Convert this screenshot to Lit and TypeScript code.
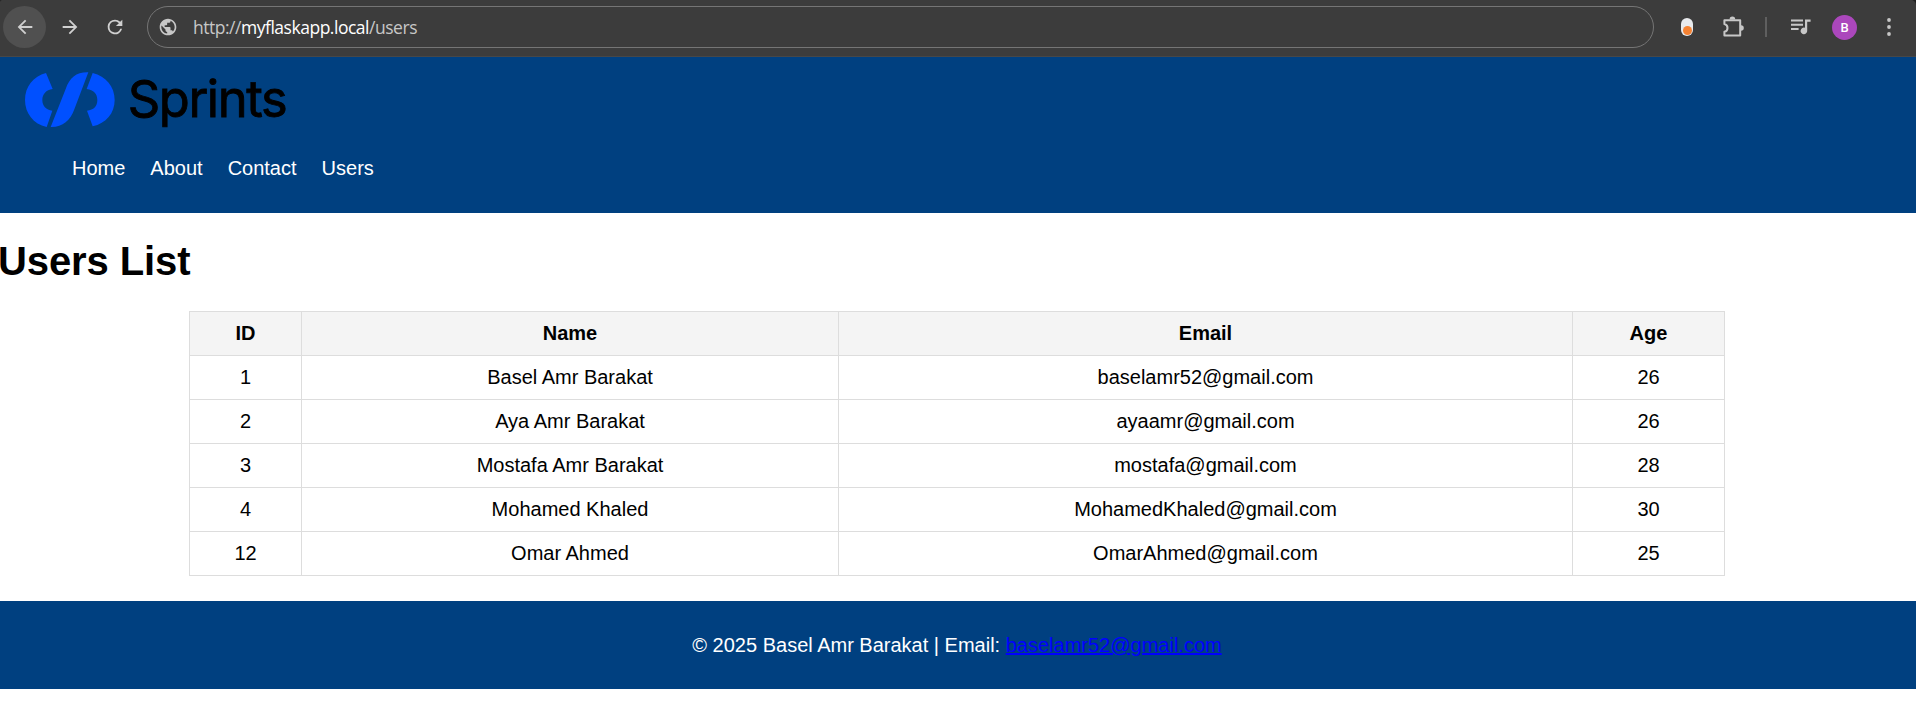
import { LitElement, html, css, svg } from "lit";
import { customElement } from "lit/decorators.js";

@customElement("browser-bar")
class BrowserBar extends LitElement {
  static styles = css`
    :host { display: block; background: #1f1f1f; }
    .bar {
      box-sizing: border-box; height: 57px; padding: 6px 15px 0 3px; display: flex; align-items: flex-start;
      background: #3c3c3c; border-bottom: 1px solid #474747; border-radius: 2px 5px 0 0;
    }
    .btn { width: 43px; height: 42px; display: flex; align-items: center; justify-content: center; margin-right: 2px; flex: none; }
    .round { background: #505050; border-radius: 50%; }
    svg { display: block; flex: none; }
    .address {
      box-sizing: border-box; height: 42px; flex: 1; margin-left: 9px; display: flex; align-items: center;
      border: 1px solid #757575; border-radius: 21px; padding-left: 10px;
      font: 17.5px/24px "Open Sans", "Noto Sans", sans-serif; color: #c7c7c7;
    }
    .url { margin-left: 15px; white-space: pre; letter-spacing: -0.48px; }
    .host { color: #fff; }
    .tools { display: flex; align-items: center; height: 42px; }
    .pill { box-sizing: border-box; width: 12px; height: 18px; border-radius: 6px; background: #e8eaed; margin: 0 27px; display: flex; align-items: flex-end; justify-content: center; padding-bottom: 1px; }
    .dot { width: 9px; height: 9px; border-radius: 50%; background: #f58233; }
    .rule { width: 2px; height: 20px; background: #5f5f5f; margin: 0 24px 0 19px; }
    .avatar {
      width: 25px; height: 25px; border-radius: 50%; background: #ab47bc; color: #fff; margin: 0 20px 0 21px;
      font: 500 13px/25px Roboto, sans-serif; text-align: center;
    }
  `;
  render() {
    return html`<div class="bar">
      <div class="btn round"><svg width="22" height="22" viewBox="0 0 24 24" fill="#d0d0d0"><path d="M20 11H7.83l5.59-5.59L12 4l-8 8 8 8 1.41-1.41L7.83 13H20z"/></svg></div>
      <div class="btn"><svg width="22" height="22" viewBox="0 0 24 24" fill="#d0d0d0"><path d="M4 13h12.17l-5.59 5.59L12 20l8-8-8-8-1.41 1.41L16.17 11H4z"/></svg></div>
      <div class="btn"><svg width="22" height="22" viewBox="0 0 24 24" fill="#d0d0d0"><path d="M17.65 6.35A7.96 7.96 0 0 0 12 4a8 8 0 1 0 7.73 10h-2.08A6 6 0 1 1 12 6c1.66 0 3.14.69 4.22 1.78L13 11h7V4z"/></svg></div>
      <div class="address">
        <svg width="20" height="20" viewBox="0 0 24 24" fill="#c7c7c7"><path d="M12 2C6.48 2 2 6.48 2 12s4.48 10 10 10 10-4.48 10-10S17.52 2 12 2zm-1 17.93c-3.95-.49-7-3.85-7-7.93 0-.62.08-1.21.21-1.79L9 15v1c0 1.1.9 2 2 2v1.93zm6.9-2.54c-.26-.81-1-1.39-1.9-1.39h-1v-3c0-.55-.45-1-1-1H8v-2h2c.55 0 1-.45 1-1V7h2c1.1 0 2-.9 2-2v-.41c2.93 1.19 5 4.06 5 7.41 0 2.08-.8 3.97-2.1 5.39z"/></svg>
        <span class="url">http://<span class="host">myflaskapp.local</span>/users</span>
      </div>
      <div class="tools">
        <div class="pill"><div class="dot"></div></div>
        <svg width="26" height="26" viewBox="0 0 26 26"><path d="M4.4 6.2H20.2V21.6H4.4V17.8A4 4 0 0 0 4.4 10Z" fill="none" stroke="#c7c7c7" stroke-width="2" stroke-linejoin="round"/><path d="M9.6 5.4a2.8 2.8 0 0 1 5.6 0zM21 11.2a2.8 2.8 0 0 1 0 5.6z" fill="#c7c7c7"/></svg>
        <div class="rule"></div>
        <svg width="20" height="18" viewBox="0 0 20 18" fill="#c7c7c7"><path d="M0 1.6h12v2H0zM0 5.8h12v2H0zM0 10h7.6v2H0zM14 1.6h5.6v2.2h-3.4v9.1a3.3 3.3 0 1 1-2.2-3.1z"/></svg>
        <div class="avatar">B</div>
        <svg width="24" height="24" viewBox="0 0 24 24" fill="#c7c7c7"><circle cx="12" cy="5" r="1.9"/><circle cx="12" cy="12" r="1.9"/><circle cx="12" cy="19" r="1.9"/></svg>
      </div>
    </div>`;
  }
}

const logo = svg`
  <path d="M138 69L158 117C138 120 127 132 127 150S138 179 157 182L140 231C100 222 75 190 75 150S100 79 138 69Z" fill="#0050ff"/>
  <path d="M265 67L223 178C211 213 187 232 152 231L197 117C209 83 229 66 265 67Z" fill="#0050ff"/>
  <path d="M278 69C318 79 344 110 344 150S318 220 278 229L261 182C281 180 292 169 292 150S281 120 260 117Z" fill="#0050ff"/>
  <text class="word" x="383" y="201" textLength="480" lengthAdjust="spacing">Sprints</text>`;

interface User { id: number; name: string; email: string; age: number; }

const users: User[] = [
  { id: 1, name: "Basel Amr Barakat", email: "baselamr52@gmail.com", age: 26 },
  { id: 2, name: "Aya Amr Barakat", email: "ayaamr@gmail.com", age: 26 },
  { id: 3, name: "Mostafa Amr Barakat", email: "mostafa@gmail.com", age: 28 },
  { id: 4, name: "Mohamed Khaled", email: "MohamedKhaled@gmail.com", age: 30 },
  { id: 12, name: "Omar Ahmed", email: "OmarAhmed@gmail.com", age: 25 },
];

@customElement("app-root")
class AppRoot extends LitElement {
  static styles = css`
    :host { display: block; min-height: 723px; background: #fff; color: #000; font: 20px/23px "Liberation Sans", Arial, sans-serif; }
    .header { box-sizing: border-box; height: 156px; background: #004080; padding: 8px 25px 0; }
    .logo { display: block; }
    .word { font: 152px Inter, sans-serif; fill: #000; stroke: #000; stroke-width: 2.5px; }
    .nav { display: flex; gap: 25px; margin: 22px 0 0 47px; }
    .nav-link { color: #fff; text-decoration: none; }
    .title { font-size: 40px; line-height: 46px; margin: 25px 0 27px -2px; font-weight: bold; letter-spacing: -0.1px; }
    .table { width: 1536px; margin-left: 189px; table-layout: fixed; border-collapse: separate; border-spacing: 0; border: solid #ddd; border-width: 1px 0 0 1px; }
    .cell { padding: 10px; border: solid #ddd; border-width: 0 1px 1px 0; text-align: center; }
    .head { background: #f4f4f4; font-weight: bold; }
    .c-id { width: 112px; }
    .c-name { width: 537px; }
    .c-email { width: 734px; }
    .c-age { width: 152px; }
    .footer { box-sizing: border-box; height: 88px; margin-top: 25px; padding: 33px 2px 0 0; background: #004080; color: #fff; text-align: center; }
    .mail { color: #0000ff; }
  `;
  render() {
    return html`
      <browser-bar></browser-bar>
      <header class="header">
        <svg class="logo" width="280" height="70" viewBox="75 45 840 210">${logo}</svg>
        <nav class="nav">${["Home", "About", "Contact", "Users"].map((t) => html`<a class="nav-link" href="#">${t}</a>`)}</nav>
      </header>
      <h1 class="title">Users List</h1>
      <table class="table">
        <colgroup><col class="c-id" /><col class="c-name" /><col class="c-email" /><col class="c-age" /></colgroup>
        <thead><tr>${["ID", "Name", "Email", "Age"].map((t) => html`<th class="cell head">${t}</th>`)}</tr></thead>
        <tbody>${users.map((u) => html`<tr><td class="cell">${u.id}</td><td class="cell">${u.name}</td><td class="cell">${u.email}</td><td class="cell">${u.age}</td></tr>`)}</tbody>
      </table>
      <footer class="footer">© 2025 Basel Amr Barakat | Email: <a class="mail" href="mailto:baselamr52@gmail.com">baselamr52@gmail.com</a></footer>`;
  }
}
